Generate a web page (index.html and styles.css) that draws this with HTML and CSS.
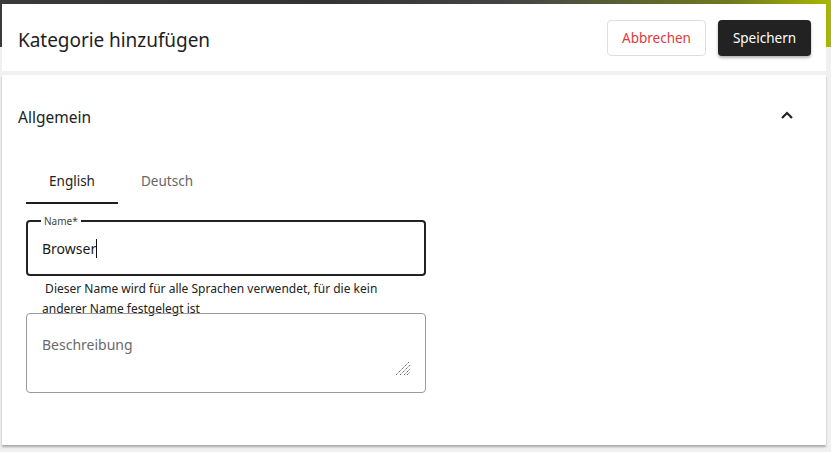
FILE: index.html
```html
<!DOCTYPE html>
<html lang="de">
<head>
<meta charset="utf-8">
<title>Kategorie hinzufügen</title>
<link rel="stylesheet" href="styles.css">
</head>
<body>
<div class="backdrop"></div>
<div class="page">
  <header class="head-card">
    <h1 class="title">Kategorie hinzufügen</h1>
    <div class="actions">
      <button class="btn btn-cancel">Abbrechen</button>
      <button class="btn btn-save">Speichern</button>
    </div>
  </header>
  <main class="body-card">
    <div class="section-head">
      <span class="section-title">Allgemein</span>
      <svg class="chev" width="14" height="10" viewBox="0 0 14 10"><path d="M2 8 L7 3 L12 8" fill="none" stroke="#222" stroke-width="2.2"/></svg>
    </div>
    <div class="tabs">
      <div class="tab active">English</div>
      <div class="tab tab-second">Deutsch</div>
    </div>
    <fieldset class="field">
      <legend class="legend">Name*</legend>
      <div class="value">Browser<span class="caret"></span></div>
    </fieldset>
    <p class="helper">&nbsp;Dieser Name wird für alle Sprachen verwendet, für die kein anderer Name festgelegt ist</p>
    <div class="textarea">
      <span class="placeholder">Beschreibung</span>
      <svg class="grip" width="16" height="15" viewBox="0 0 16 15"><path d="M1 14 L14 1 M5 14 L15 4 M9 14 L15 8 M12 14 L15 11" stroke="#666" stroke-width="1" stroke-dasharray="1.4 0.7" fill="none"/></svg>
    </div>
  </main>
</div>
</body>
</html>
```

FILE: styles.css
```css
* { box-sizing: border-box; }
html, body { margin: 0; padding: 0; }
body {
  width: 831px;
  height: 452px;
  background: #f0f0f0;
  font-family: "Noto Sans", "Open Sans", sans-serif;
  color: #222;
  position: relative;
  overflow: hidden;
}
.backdrop {
  position: absolute;
  left: 0; top: 0;
  width: 831px; height: 47px;
  background: linear-gradient(90deg, #3a3a3a 0%, #333 38%, #454545 62%, #6e7a20 88%, #a9b700 100%);
}
.page {
  position: relative;
  padding: 4px 5px 0 2px;
  display: flex;
  flex-direction: column;
  gap: 4px;
}
.head-card {
  background: #fff;
  height: 67px;
  display: flex;
  align-items: center;
  justify-content: space-between;
  padding: 0 15px 0 16px;
}
.title {
  margin: 0;
  font-size: 19px;
  font-weight: 400;
  color: #1e1e1e;
  letter-spacing: -0.05px;
  padding-top: 4px;
}
.actions {
  display: flex;
  gap: 12px;
  align-items: center;
  padding-top: 1px;
}
.btn {
  font-family: inherit;
  font-size: 13.5px;
  height: 36px;
  border-radius: 4px;
  cursor: pointer;
}
.btn-cancel {
  width: 99px;
  background: #fff;
  color: #e03a3a;
  border: 1px solid #dedede;
}
.btn-save {
  width: 93px;
  background: #222;
  color: #fff;
  border: none;
  box-shadow: 0 2px 3px rgba(0,0,0,0.3);
}
.body-card {
  background: #fff;
  height: 370px;
  box-shadow: 0 2px 2px rgba(0,0,0,0.3);
  padding: 0 0 0 24px;
}
.section-head {
  display: flex;
  justify-content: space-between;
  align-items: center;
  height: 84px;
  margin-left: -8px;
  padding-right: 32px;
}
.section-title {
  font-size: 15.5px;
  color: #222;
}
.chev { margin-top: -4px; }
.tabs {
  display: flex;
  margin-top: -1px;
}
.tab {
  width: 92px;
  height: 46px;
  display: flex;
  align-items: center;
  justify-content: center;
  font-size: 13.5px;
  color: #666;
  border-bottom: 2px solid transparent;
  padding-top: 1px;
}
.tab-second { width: 98px; }
.tab.active {
  color: #222;
  border-bottom-color: #1e1e1e;
}
.field {
  margin: 12px 0 0 0;
  width: 400px;
  height: 60px;
  border: 2px solid #222;
  border-radius: 4px;
  padding: 0 14px;
}
.legend {
  font-size: 10px;
  color: #444;
  padding: 0 3px;
  margin-left: -1px;
  line-height: 10px;
}
.value {
  font-size: 14px;
  color: #1a1a1a;
  margin-top: 13px;
  display: flex;
  align-items: center;
}
.caret {
  display: inline-block;
  width: 1px;
  height: 19px;
  background: #111;
}
.helper {
  margin: 3px 0 0 16px;
  width: 360px;
  font-size: 12px;
  line-height: 20px;
  color: #222;
}
.textarea {
  position: relative;
  width: 400px;
  height: 80px;
  border: 1px solid #9a9a9a;
  border-radius: 4px;
  margin-top: -6px;
  padding: 19px 15px;
}
.placeholder {
  font-size: 14px;
  color: #6a6a6a;
}
.grip {
  position: absolute;
  right: 14px;
  bottom: 16px;
}
```
